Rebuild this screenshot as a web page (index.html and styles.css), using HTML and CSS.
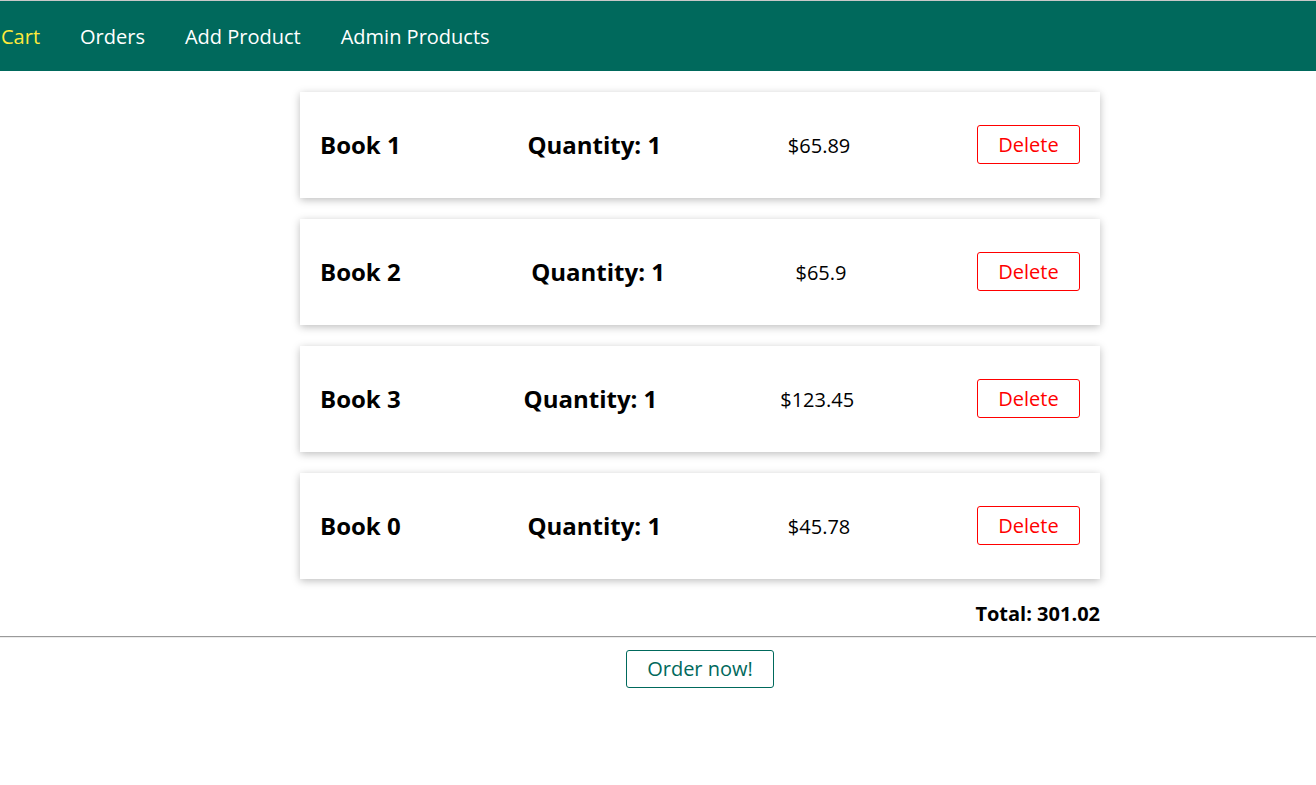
FILE: index.html
```html
<!DOCTYPE html>
<html lang="en">
<head>
<meta charset="utf-8">
<title>Your Cart</title>
<link rel="stylesheet" href="styles.css">
</head>
<body>
<header class="main-header">
  <nav class="main-header__nav">
    <ul class="main-header__item-list">
      <li class="main-header__item"><a class="active" href="#">Cart</a></li>
      <li class="main-header__item"><a href="#">Orders</a></li>
      <li class="main-header__item"><a href="#">Add Product</a></li>
      <li class="main-header__item"><a href="#">Admin Products</a></li>
    </ul>
  </nav>
</header>
<main class="cart-main">
  <ul class="cart__item-list">
    <li class="cart__item">
      <h1 class="cart__title">Book 1</h1>
      <h2 class="cart__qty">Quantity: 1</h2>
      <p class="cart__price">$65.89</p>
      <button class="btn btn--danger" type="button">Delete</button>
    </li>
    <li class="cart__item">
      <h1 class="cart__title">Book 2</h1>
      <h2 class="cart__qty">Quantity: 1</h2>
      <p class="cart__price">$65.9</p>
      <button class="btn btn--danger" type="button">Delete</button>
    </li>
    <li class="cart__item">
      <h1 class="cart__title">Book 3</h1>
      <h2 class="cart__qty">Quantity: 1</h2>
      <p class="cart__price">$123.45</p>
      <button class="btn btn--danger" type="button">Delete</button>
    </li>
    <li class="cart__item">
      <h1 class="cart__title">Book 0</h1>
      <h2 class="cart__qty">Quantity: 1</h2>
      <p class="cart__price">$45.78</p>
      <button class="btn btn--danger" type="button">Delete</button>
    </li>
  </ul>
  <div class="cart__total">Total: 301.02</div>
</main>
<hr class="divider">
<div class="centered">
  <button class="btn btn--order" type="button">Order now!</button>
</div>
</body>
</html>
```
FILE: styles.css
```css
* {
  box-sizing: border-box;
}

html, body {
  margin: 0;
  padding: 0;
}

body {
  font-family: "Open Sans", "Noto Sans", sans-serif;
  color: #000;
  background: #fff;
  border-top: 1px solid #c8c8c8;
}

.main-header {
  height: 70px;
  background-color: #00695c;
  display: flex;
  align-items: center;
}

.main-header__nav {
  height: 100%;
  display: flex;
  align-items: center;
}

.main-header__item-list {
  list-style: none;
  margin: 0;
  padding: 0 0 0 1px;
  display: flex;
  align-items: center;
  gap: 40px;
}

.main-header__item a {
  text-decoration: none;
  color: #fff;
  font-size: 20px;
  line-height: 27px;
}

.main-header__item a.active {
  color: #ffeb3b;
}

.cart-main {
  width: 800px;
  margin: 21px 0 0 300px;
}

.cart__item-list {
  list-style: none;
  margin: 0;
  padding: 0;
  display: flex;
  flex-direction: column;
  gap: 21px;
}

.cart__item {
  height: 106px;
  padding: 0 20px;
  display: flex;
  align-items: center;
  justify-content: space-between;
  box-shadow: 0 2px 8px rgba(0, 0, 0, 0.26);
  background: #fff;
}

.cart__title,
.cart__qty {
  margin: 0;
  font-size: 24px;
  font-weight: 700;
  line-height: 32px;
}

.cart__price {
  margin: 0;
  font-size: 20px;
  line-height: 27px;
}

.btn {
  font: inherit;
  font-size: 20px;
  line-height: 27px;
  padding: 5px 20px;
  color: #00695c;
  border: 1px solid #00695c;
  border-radius: 3px;
  background: #fff;
  cursor: pointer;
}

.btn--danger {
  color: #f00;
  border-color: #f00;
  width: 103px;
  padding: 5px 0;
  text-align: center;
  margin-bottom: 2px;
}

.btn--order {
  height: 38px;
  padding: 0 20px;
  line-height: 36px;
}

.cart__total {
  margin-top: 21px;
  text-align: right;
  font-size: 20px;
  font-weight: 700;
  line-height: 27px;
}

.divider {
  margin: 9px 0 12px;
  border: 0;
  border-top: 1px solid #9a9a9a;
  border-bottom: 1px solid #ececec;
  height: 0;
}

.centered {
  width: 800px;
  margin: 0 0 0 300px;
  text-align: center;
}
```
